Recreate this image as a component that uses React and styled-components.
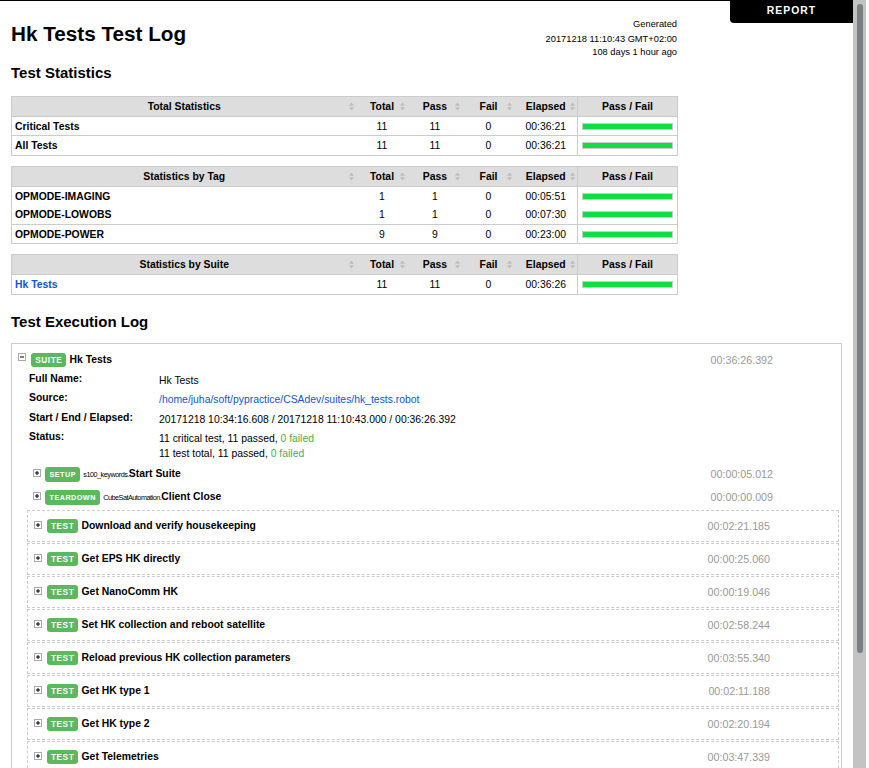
import React from 'react';
import styled, { createGlobalStyle } from 'styled-components';

const FONT = `"Liberation Sans", Helvetica, Arial, sans-serif`;

const GlobalStyle = createGlobalStyle`
  html, body { margin: 0; padding: 0; background: #fff; overflow: hidden; }
  body { font-family: ${FONT}; font-size: 10.4px; color: #000; }
  a { color: #15c; text-decoration: none; }
`;

const Page = styled.div`
  position: relative;
  width: 853px;
  height: 768px;
  box-sizing: border-box;
  padding: 0 11px;
  border-top: 1px solid #000;
  overflow: hidden;
`;

const ReportTab = styled.a`
  position: fixed;
  top: 0;
  left: 730px;
  width: 123px;
  height: 22.7px;
  background: #000;
  color: #fff !important;
  font-weight: bold;
  font-size: 10.4px;
  letter-spacing: 1.04px;
  line-height: 22.7px;
  text-align: center;
  border-bottom-left-radius: 4px;
  z-index: 10;
`;

const Header = styled.div`
  display: flex;
  justify-content: space-between;
  align-items: flex-start;
  width: 666px;
  height: 46px;
`;

const Title = styled.h1`
  margin: 21.3px 0 0;
  font-size: 20.7px;
  line-height: 23px;
  font-weight: bold;
`;

const Generated = styled.div`
  margin-top: 17.2px;
  text-align: right;
  font-size: 9.3px;
  line-height: 13px;
  white-space: nowrap;
`;

const GenLine = styled.div`
  margin-bottom: ${(p) => (p.$first ? '2px' : '0')};
`;

const H2 = styled.h2`
  margin: ${(p) => p.$mt}px 0 ${(p) => p.$mb}px;
  font-size: 15px;
  line-height: 17px;
  font-weight: bold;
`;

const StatsTable = styled.table`
  width: 666px;
  table-layout: fixed;
  border-collapse: collapse;
  border: 1px solid #ccc;
  margin-bottom: 10px;
`;

const Col = styled.col`
  width: ${(p) => p.$w}px;
`;

const Row = styled.tr`
  border-top: ${(p) => (p.$noTop ? 'none' : '1px solid #ccc')};
`;

const Th = styled.th`
  position: relative;
  background: #ddd;
  padding: 3px 4px;
  line-height: 13px;
  font-weight: bold;
  text-align: center;
  white-space: nowrap;
  border-left: ${(p) => (p.$graph ? '1px solid #ccc' : 'none')};
`;

const Td = styled.td`
  padding: 3px ${(p) => (p.$name ? '3px' : '4px')} 2.5px;
  line-height: 13px;
  text-align: ${(p) => (p.$name ? 'left' : 'center')};
  font-weight: ${(p) => (p.$name ? 'bold' : 'normal')};
  border-left: ${(p) => (p.$graph ? '1px solid #ccc' : 'none')};
  white-space: nowrap;
`;

const SortIcon = styled.svg`
  position: absolute;
  right: 2.5px;
  top: 50%;
  margin-top: -4.5px;
  width: 5px;
  height: 9px;
`;

const Graph = styled.div`
  height: 7px;
  box-sizing: border-box;
  border: 1px solid #ccc;
  background: #f33;
`;

const PassBar = styled.div`
  height: 100%;
  background: #1d4;
`;

const SuiteBox = styled.div`
  border: 1px solid #ccc;
  padding-bottom: 40px;
`;

const ElementHeader = styled.div`
  display: flex;
  align-items: center;
  padding: ${(p) => p.$pad};
`;

const ToggleBox = styled.svg`
  flex: none;
  align-self: flex-start;
  width: 8px;
  height: 8px;
  margin-top: ${(p) => p.$mt}px;
  margin-right: 4.5px;
`;

const Label = styled.span`
  flex: none;
  background: #5cb85c;
  color: #fff;
  font-size: ${(p) => (p.$small ? '7.2px' : '8.3px')};
  font-weight: bold;
  letter-spacing: 0.5px;
  line-height: ${(p) => (p.$small ? '11px' : '10px')};
  padding: 2px 4px 2px 4.5px;
  border-radius: 3px;
  margin-right: 3.3px;
`;

const Name = styled.span`
  font-weight: bold;
  line-height: 14px;
  white-space: nowrap;
`;

const ParentName = styled.span`
  font-weight: normal;
  font-size: 7.3px;
  letter-spacing: -0.51px;
`;

const Elapsed = styled.span`
  margin-left: auto;
  color: #999;
  font-size: 10.7px;
  line-height: 14px;
  white-space: nowrap;
`;

const Children = styled.div`
  margin: 0 2px 0 15px;
`;

const MetaTable = styled.table`
  border-collapse: collapse;
  margin-left: 2px;
`;

const MetaLabel = styled.th`
  width: 130px;
  text-align: left;
  vertical-align: top;
  font-weight: bold;
  padding: 1px 0 3.5px;
  line-height: 15px;
  white-space: nowrap;
`;

const MetaValue = styled.td`
  vertical-align: top;
  padding: 2.75px 0 1.75px;
  line-height: 15px;
  white-space: nowrap;
`;

const PassText = styled.span`
  color: #4cae4c;
`;

const TestBox = styled.div`
  border: 1px dashed #ccc;
  margin-top: 1px;
`;

const ScrollTrack = styled.div`
  position: fixed;
  top: 0;
  left: 853px;
  width: 13px;
  height: 768px;
  background: #c3c3c3;
  z-index: 20;
`;

const ScrollThumb = styled.div`
  position: absolute;
  top: 4px;
  left: 4px;
  width: 6px;
  height: 649px;
  background: #7b7f7f;
  border-radius: 3px;
`;

const Sort = () => (
  <SortIcon viewBox="0 0 5 9">
    <path d="M0 3.8 L2.5 0.6 L5 3.8 Z M0 5.2 L2.5 8.4 L5 5.2 Z" fill="#bdbdbd" />
  </SortIcon>
);

const Toggle = ({ open, mt }) => (
  <ToggleBox viewBox="0 0 8 8" $mt={mt}>
    <rect x="0.5" y="0.5" width="7" height="7" fill="#fff" stroke="#aaa" />
    <path d="M2 4 H6" stroke="#000" strokeWidth="1" />
    {!open && <path d="M4 2 V6" stroke="#000" strokeWidth="1" />}
  </ToggleBox>
);

const StatTable = ({ title, rows }) => (
  <StatsTable>
    <colgroup>
      <Col $w={345} />
      <Col $w={51} />
      <Col $w={55} />
      <Col $w={52} />
      <Col $w={63} />
      <Col $w={100} />
    </colgroup>
    <thead>
      <Row>
        <Th>{title}<Sort /></Th>
        <Th>Total<Sort /></Th>
        <Th>Pass<Sort /></Th>
        <Th>Fail<Sort /></Th>
        <Th>Elapsed<Sort /></Th>
        <Th $graph>Pass / Fail</Th>
      </Row>
    </thead>
    <tbody>
      {rows.map((r) => (
        <Row key={r.name} $noTop={r.noTop}>
          <Td $name>{r.link ? <a href="#s1">{r.name}</a> : r.name}</Td>
          <Td>{r.total}</Td>
          <Td>{r.pass}</Td>
          <Td>{r.fail}</Td>
          <Td>{r.elapsed}</Td>
          <Td $graph>
            <Graph>
              <PassBar style={{ width: `${(r.pass / r.total) * 100}%` }} />
            </Graph>
          </Td>
        </Row>
      ))}
    </tbody>
  </StatsTable>
);

const tests = [
  ['Download and verify housekeeping', '00:02:21.185'],
  ['Get EPS HK directly', '00:00:25.060'],
  ['Get NanoComm HK', '00:00:19.046'],
  ['Set HK collection and reboot satellite', '00:02:58.244'],
  ['Reload previous HK collection parameters', '00:03:55.340'],
  ['Get HK type 1', '00:02:11.188'],
  ['Get HK type 2', '00:02:20.194'],
  ['Get Telemetries', '00:03:47.339'],
];

export default function App() {
  return (
    <>
      <GlobalStyle />
      <Page>
        <ReportTab href="#report">REPORT</ReportTab>
        <Header>
          <Title>Hk Tests Test Log</Title>
          <Generated>
            <GenLine $first>Generated</GenLine>
            <GenLine>20171218 11:10:43 GMT+02:00</GenLine>
            <GenLine>108 days 1 hour ago</GenLine>
          </Generated>
        </Header>

        <H2 $mt={16.6} $mb={15.4}>Test Statistics</H2>

        <StatTable
          title="Total Statistics"
          rows={[
            { name: 'Critical Tests', total: 11, pass: 11, fail: 0, elapsed: '00:36:21' },
            { name: 'All Tests', total: 11, pass: 11, fail: 0, elapsed: '00:36:21' },
          ]}
        />
        <StatTable
          title="Statistics by Tag"
          rows={[
            { name: 'OPMODE-IMAGING', total: 1, pass: 1, fail: 0, elapsed: '00:05:51' },
            { name: 'OPMODE-LOWOBS', total: 1, pass: 1, fail: 0, elapsed: '00:07:30', noTop: true },
            { name: 'OPMODE-POWER', total: 9, pass: 9, fail: 0, elapsed: '00:23:00' },
          ]}
        />
        <StatTable
          title="Statistics by Suite"
          rows={[{ name: 'Hk Tests', link: true, total: 11, pass: 11, fail: 0, elapsed: '00:36:26' }]}
        />

        <H2 $mt={18.3} $mb={12.7}>Test Execution Log</H2>

        <SuiteBox>
          <ElementHeader $pad="8.7px 68px 3.1px 6.3px">
            <Toggle open mt={0} />
            <Label>SUITE</Label>
            <Name>Hk Tests</Name>
            <Elapsed>00:36:26.392</Elapsed>
          </ElementHeader>
          <Children>
            <MetaTable>
              <tbody>
                <tr>
                  <MetaLabel>Full Name:</MetaLabel>
                  <MetaValue>Hk Tests</MetaValue>
                </tr>
                <tr>
                  <MetaLabel>Source:</MetaLabel>
                  <MetaValue>
                    <a href="#src">/home/juha/soft/pypractice/CSAdev/suites/hk_tests.robot</a>
                  </MetaValue>
                </tr>
                <tr>
                  <MetaLabel>Start / End / Elapsed:</MetaLabel>
                  <MetaValue>20171218 10:34:16.608 / 20171218 11:10:43.000 / 00:36:26.392</MetaValue>
                </tr>
                <tr>
                  <MetaLabel>Status:</MetaLabel>
                  <MetaValue>
                    11 critical test, 11 passed, <PassText>0 failed</PassText>
                    <br />
                    11 test total, 11 passed, <PassText>0 failed</PassText>
                  </MetaValue>
                </tr>
              </tbody>
            </MetaTable>

            <ElementHeader $pad="4px 66px 4px 5.5px">
              <Toggle mt={2.5} />
              <Label $small>SETUP</Label>
              <Name>
                <ParentName>s100_keywords.</ParentName>Start Suite
              </Name>
              <Elapsed>00:00:05.012</Elapsed>
            </ElementHeader>
            <ElementHeader $pad="4px 66px 4px 5.5px">
              <Toggle mt={2.5} />
              <Label $small>TEARDOWN</Label>
              <Name>
                <ParentName>CubeSatAutomation.</ParentName>Client Close
              </Name>
              <Elapsed>00:00:00.009</Elapsed>
            </ElementHeader>

            {tests.map(([name, time]) => (
              <TestBox key={name}>
                <ElementHeader $pad="8px 68px 8px 6px">
                  <Toggle mt={2} />
                  <Label>TEST</Label>
                  <Name>{name}</Name>
                  <Elapsed>{time}</Elapsed>
                </ElementHeader>
              </TestBox>
            ))}
          </Children>
        </SuiteBox>
      </Page>
      <ScrollTrack>
        <ScrollThumb />
      </ScrollTrack>
    </>
  );
}
